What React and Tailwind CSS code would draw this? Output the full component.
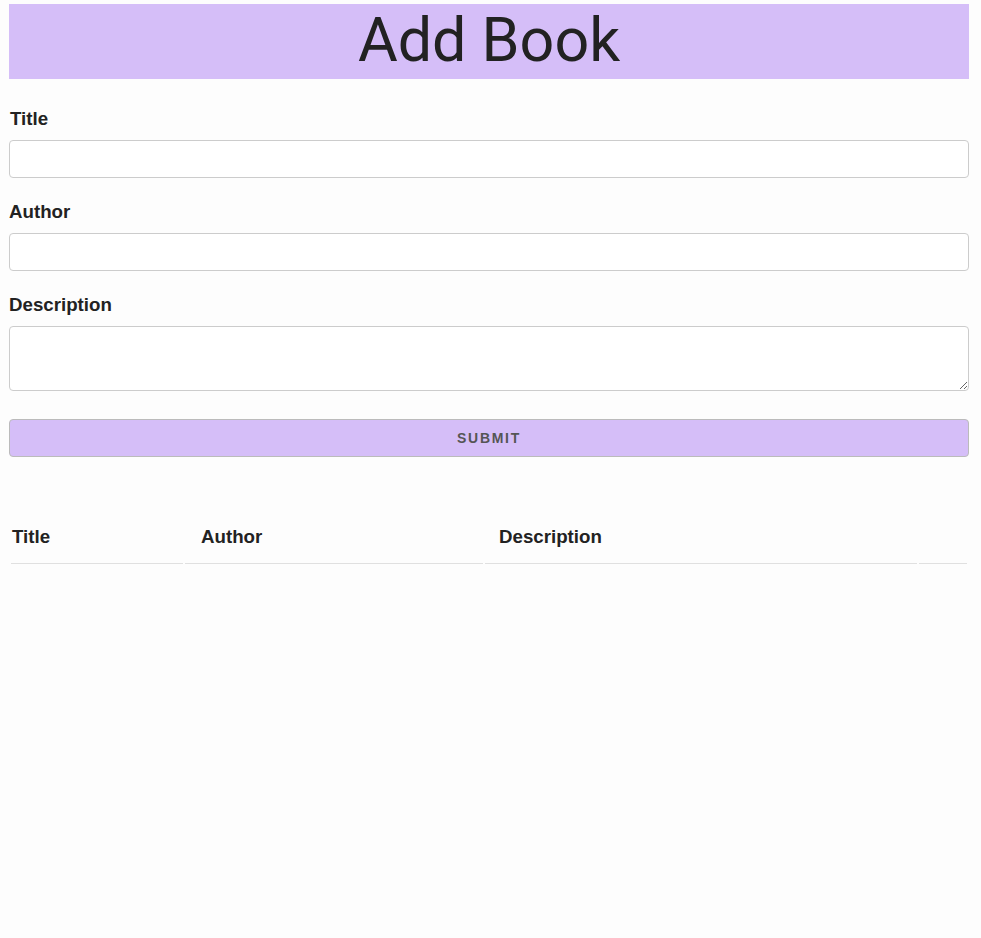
// App.jsx
import React, { useState } from "react";

export default function App() {
  const [title, setTitle] = useState("");
  const [author, setAuthor] = useState("");
  const [description, setDescription] = useState("");

  const labelCls =
    "block text-[18.7px] leading-[21px] font-bold text-[#222]";
  const inputCls =
    "block w-full h-[38px] mt-[11px] px-2 border border-[#cccccc] rounded-[4px] bg-white outline-none";

  return (
    <div
      className="min-h-screen bg-[#fdfdfd] pt-1"
      style={{ fontFamily: '"Liberation Sans", Arial, sans-serif' }}
    >
      <div className="w-[960px] ml-[9px]">
        <div className="h-[75px] bg-[#d5bef8] flex items-center justify-center">
          <h1
            className="text-[61px] leading-none text-[#222] font-normal pb-[2px]"
            style={{ fontFamily: "Roboto, Arial, sans-serif" }}
          >
            Add Book
          </h1>
        </div>

        <form onSubmit={(e) => e.preventDefault()}>
          <label className={labelCls + " mt-[29px] pl-px"}>Title</label>
          <input
            className={inputCls}
            value={title}
            onChange={(e) => setTitle(e.target.value)}
          />

          <label className={labelCls + " mt-[23px]"}>Author</label>
          <input
            className={inputCls}
            value={author}
            onChange={(e) => setAuthor(e.target.value)}
          />

          <label className={labelCls + " mt-[23px]"}>Description</label>
          <textarea
            className="block w-full h-[65px] mt-[11px] px-2 border border-[#cccccc] rounded-[4px] bg-white outline-none"
            value={description}
            onChange={(e) => setDescription(e.target.value)}
          />

          <button
            type="submit"
            className="block w-full h-[38px] mt-[28px] bg-[#d5bef8] border border-[#bbbbbb] rounded-[4px] text-[14px] font-bold tracking-[1.7px] text-[#555]"
          >
            SUBMIT
          </button>
        </form>

        <table className="w-[960px] mt-[47px] border-separate border-spacing-[2px] text-[18.7px] leading-[21px] text-[#222]">
          <thead>
            <tr>
              <th className="w-[172px] text-left font-bold pl-px pt-[20px] pb-[16px] border-b border-[#e0e0e0]">
                Title
              </th>
              <th className="w-[298px] text-left font-bold pl-4 pt-[20px] pb-[16px] border-b border-[#e0e0e0]">
                Author
              </th>
              <th className="w-[432px] text-left font-bold pl-[14px] pt-[20px] pb-[16px] border-b border-[#e0e0e0]">
                Description
              </th>
              <th className="w-[48px] border-b border-[#e0e0e0]"></th>
            </tr>
          </thead>
          <tbody></tbody>
        </table>
      </div>
    </div>
  );
}
